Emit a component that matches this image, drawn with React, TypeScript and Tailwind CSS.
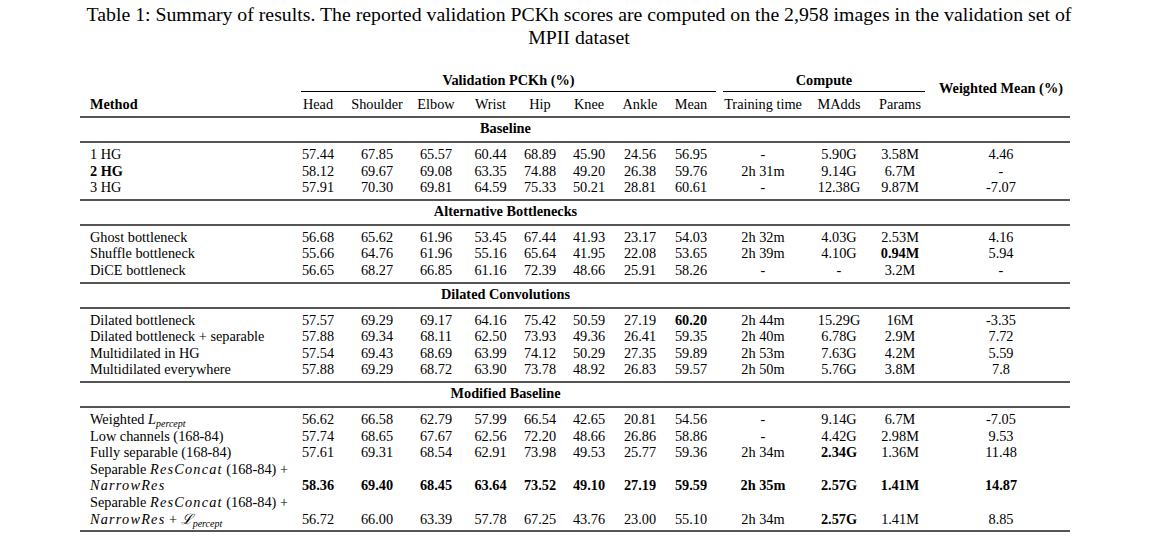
import React from 'react';

const cols =
  'grid grid-cols-[209px_58px_60px_58px_51px_48px_50px_52px_50px_94px_58px_64px_138px]';

type Row = {
  name: React.ReactNode;
  vals?: string[];
  bold?: number[];
  boldName?: boolean;
};

const Lp = () => (
  <>
    <span className="italic">L</span>
    <span className="italic text-[10px] relative top-[3px]">percept</span>
  </>
);

const NarrowRes = () => <span className="italic tracking-[1.2px]">NarrowRes</span>;
const ResConcat = () => <span className="italic tracking-[1.2px]">ResConcat</span>;

const sections: { title: string; rows: Row[] }[] = [
  {
    title: 'Baseline',
    rows: [
      { name: '1 HG', vals: ['57.44', '67.85', '65.57', '60.44', '68.89', '45.90', '24.56', '56.95', '-', '5.90G', '3.58M', '4.46'] },
      { name: '2 HG', boldName: true, vals: ['58.12', '69.67', '69.08', '63.35', '74.88', '49.20', '26.38', '59.76', '2h 31m', '9.14G', '6.7M', '-'] },
      { name: '3 HG', vals: ['57.91', '70.30', '69.81', '64.59', '75.33', '50.21', '28.81', '60.61', '-', '12.38G', '9.87M', '-7.07'] },
    ],
  },
  {
    title: 'Alternative Bottlenecks',
    rows: [
      { name: 'Ghost bottleneck', vals: ['56.68', '65.62', '61.96', '53.45', '67.44', '41.93', '23.17', '54.03', '2h 32m', '4.03G', '2.53M', '4.16'] },
      { name: 'Shuffle bottleneck', vals: ['55.66', '64.76', '61.96', '55.16', '65.64', '41.95', '22.08', '53.65', '2h 39m', '4.10G', '0.94M', '5.94'], bold: [10] },
      { name: 'DiCE bottleneck', vals: ['56.65', '68.27', '66.85', '61.16', '72.39', '48.66', '25.91', '58.26', '-', '-', '3.2M', '-'] },
    ],
  },
  {
    title: 'Dilated Convolutions',
    rows: [
      { name: 'Dilated bottleneck', vals: ['57.57', '69.29', '69.17', '64.16', '75.42', '50.59', '27.19', '60.20', '2h 44m', '15.29G', '16M', '-3.35'], bold: [7] },
      { name: 'Dilated bottleneck + separable', vals: ['57.88', '69.34', '68.11', '62.50', '73.93', '49.36', '26.41', '59.35', '2h 40m', '6.78G', '2.9M', '7.72'] },
      { name: 'Multidilated in HG', vals: ['57.54', '69.43', '68.69', '63.99', '74.12', '50.29', '27.35', '59.89', '2h 53m', '7.63G', '4.2M', '5.59'] },
      { name: 'Multidilated everywhere', vals: ['57.88', '69.29', '68.72', '63.90', '73.78', '48.92', '26.83', '59.57', '2h 50m', '5.76G', '3.8M', '7.8'] },
    ],
  },
  {
    title: 'Modified Baseline',
    rows: [
      { name: <>Weighted <Lp /></>, vals: ['56.62', '66.58', '62.79', '57.99', '66.54', '42.65', '20.81', '54.56', '-', '9.14G', '6.7M', '-7.05'] },
      { name: 'Low channels (168-84)', vals: ['57.74', '68.65', '67.67', '62.56', '72.20', '48.66', '26.86', '58.86', '-', '4.42G', '2.98M', '9.53'] },
      { name: 'Fully separable (168-84)', vals: ['57.61', '69.31', '68.54', '62.91', '73.98', '49.53', '25.77', '59.36', '2h 34m', '2.34G', '1.36M', '11.48'], bold: [9] },
      { name: <>Separable <ResConcat /> (168-84) +</> },
      { name: <NarrowRes />, vals: ['58.36', '69.40', '68.45', '63.64', '73.52', '49.10', '27.19', '59.59', '2h 35m', '2.57G', '1.41M', '14.87'], bold: [0, 1, 2, 3, 4, 5, 6, 7, 8, 9, 10, 11] },
      { name: <>Separable <ResConcat /> (168-84) +</> },
      {
        name: (
          <>
            <NarrowRes /> + <span className="italic">ℒ</span>
            <span className="italic text-[10px] relative top-[3px]">percept</span>
          </>
        ),
        vals: ['56.72', '66.00', '63.39', '57.78', '67.25', '43.76', '23.00', '55.10', '2h 34m', '2.57G', '1.41M', '8.85'],
        bold: [9],
      },
    ],
  },
];

const heads = ['Head', 'Shoulder', 'Elbow', 'Wrist', 'Hip', 'Knee', 'Ankle', 'Mean', 'Training time', 'MAdds', 'Params'];

function Rule() {
  return <div className="h-[2px] w-[990px] bg-[#555]" />;
}

export default function App() {
  return (
    <div className="w-[1158px] h-[542px] bg-white text-black font-['Liberation_Serif',serif] overflow-hidden">
      <p className="mx-auto w-[1000px] pt-[3px] text-center text-[19.8px] leading-[23px]">
        Table 1: Summary of results. The reported validation PCKh scores are computed on the 2,958 images in the validation set of MPII dataset
      </p>

      <div className="ml-[80px] mt-[21px] w-[990px] text-[14.3px] leading-[17px]">
        <div className={cols}>
          <div className="col-start-2 col-span-8 ml-[12px] h-[22px] border-b border-black flex items-center justify-center font-bold">
            Validation PCKh (%)
          </div>
          <div className="col-span-3 mx-[7px] h-[22px] border-b border-black flex items-center justify-center font-bold">
            Compute
          </div>
          <div className="row-span-2 pt-[10px] text-center font-bold">Weighted Mean (%)</div>
          <div className="h-[24px] pl-[10px] flex items-center font-bold">Method</div>
          {heads.map((h) => (
            <div key={h} className="h-[24px] flex items-center justify-center whitespace-nowrap">
              {h}
            </div>
          ))}
        </div>
        <Rule />

        {sections.map((s) => (
          <div key={s.title}>
            <div className={`${cols} h-[23px]`}>
              <div className="col-start-2 col-span-8 ml-[6px] flex items-center justify-center pb-[2px] font-bold">
                {s.title}
              </div>
            </div>
            <Rule />
            <div className="pt-[3px] pb-[3px]">
              {s.rows.map((r, i) => (
                <div key={i} className={`${cols} h-[16.6px] items-center`}>
                  <div className={`pl-[10px] whitespace-nowrap ${r.boldName ? 'font-bold' : ''}`}>{r.name}</div>
                  {r.vals?.map((v, j) => (
                    <div key={j} className={`text-center whitespace-nowrap ${r.bold?.includes(j) ? 'font-bold' : ''}`}>
                      {v}
                    </div>
                  ))}
                </div>
              ))}
            </div>
            <Rule />
          </div>
        ))}
      </div>
    </div>
  );
}
